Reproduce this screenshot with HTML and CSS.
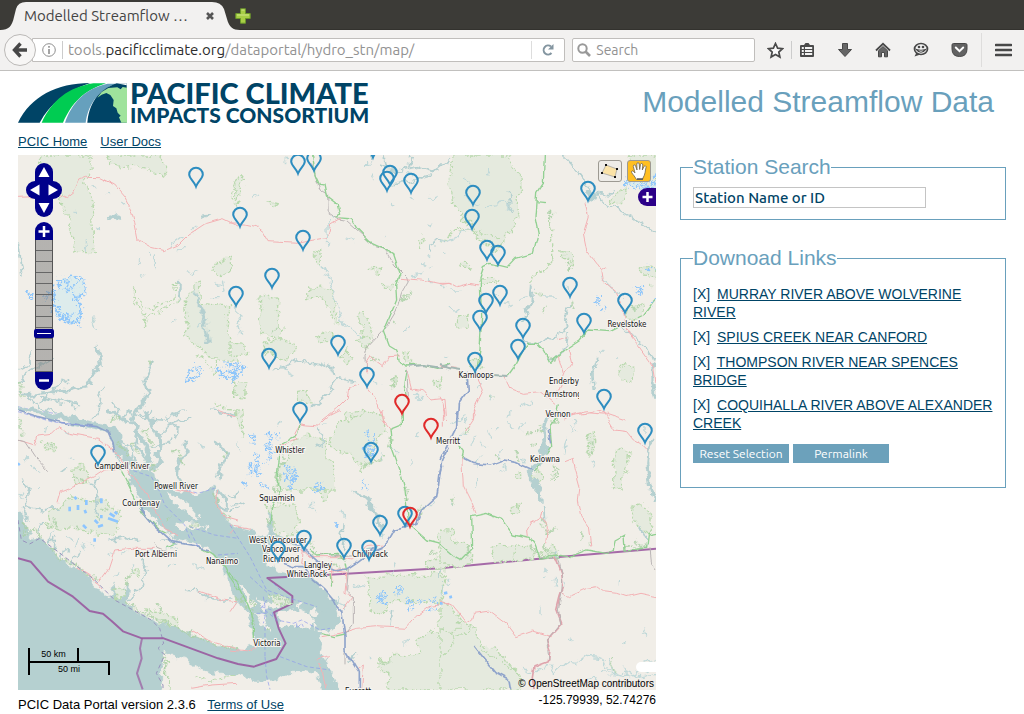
FILE: index.html
```html
<!DOCTYPE html>
<html lang="en">
<head>
<meta charset="utf-8">
<title>Modelled Streamflow Data</title>
<link rel="stylesheet" href="styles.css">
</head>
<body>
<header class="browser">
  <div class="tabstrip">
    <svg class="tab-shape" viewBox="0 0 232 28" aria-hidden="true"><path d="M0 28C9 28 12 24 14 15L16 7Q18 0 26 0H212Q221 0 224 7L227 17C229 25 233 28 240 28Z" fill="#f2f1f0"/></svg>
    <div class="tab"><span class="tab-title">Modelled Streamflow …</span>
      <button class="icon-btn" aria-label="Close tab"><svg width="10" height="10" viewBox="0 0 10 10"><path d="M2 2L8 8M8 2L2 8" stroke="#555" stroke-width="2.6"/></svg></button>
    </div>
    <button class="icon-btn new-tab" aria-label="New tab"><svg width="16" height="16" viewBox="0 0 16 16"><path d="M5.500 .8H10.500V5.500H15.200V10.500H10.500V15.200H5.500V10.500H.8V5.500H5.500Z" fill="#a8cf45" stroke="#6c982b"/><path d="M6.500 2H9.500M2 7H14" stroke="#cfe58a"/></svg></button>
  </div>
  <div class="toolbar">
    <button class="back" aria-label="Back"><svg width="16" height="16" viewBox="0 0 16 16"><path d="M8.500 1.500L2.500 8L8.500 14.500M3 8H15" fill="none" stroke="#474747" stroke-width="3.400"/></svg></button>
    <div class="urlbar">
      <svg width="14" height="14" viewBox="0 0 14 14" fill="none" stroke="#8e8e8e"><circle cx="7" cy="7" r="6.300"/><path d="M7 6V11M7 3V4.700" stroke-width="1.600"/></svg>
      <span class="url">tools.<b>pacificclimate.org</b>/dataportal/hydro_stn/map/</span>
      <button class="icon-btn reload" aria-label="Reload"><svg width="14" height="14" viewBox="0 0 14 14"><path d="M10.500 10A4.500 4.500 0 1 1 10 3.500" fill="none" stroke="#8395a0" stroke-width="2"/><path d="M12.500 1V6.500H7Z" fill="#8395a0"/></svg></button>
    </div>
    <label class="searchbar"><svg width="14" height="14" viewBox="0 0 14 14" fill="none" stroke="#999" stroke-width="2"><circle cx="5.500" cy="5.500" r="4.200"/><path d="M8.500 8.500L13 13" stroke-width="2.600"/></svg><input type="search" placeholder="Search" aria-label="Search"></label>
    <nav class="tools">
      <button class="icon-btn" aria-label="Bookmark"><svg width="17" height="17" viewBox="0 0 17 17"><path d="M8.500 1.500L10.600 6.100L15.500 6.600L11.800 10L12.900 15L8.500 12.400L4.100 15L5.200 10L1.500 6.600L6.400 6.100Z" fill="#fafafa" stroke="#4a4a4a" stroke-width="1.700"/></svg></button>
      <span class="divider"></span>
      <button class="icon-btn" aria-label="Bookmarks list"><svg width="16" height="16" viewBox="0 0 16 16"><path d="M2 3H5L6.500 1H9.500L11 3H14Q15 3 15 4V14Q15 15 14 15H2Q1 15 1 14V4Q1 3 2 3Z" fill="#4a4a4a"/><path d="M2.800 6H4.800M2.800 9H4.800M2.800 12H4.800M6 6H13.200M6 9H13.200M6 12H13.200" stroke="#f4f4f4" stroke-width="1.800"/></svg></button>
      <button class="icon-btn" aria-label="Downloads"><svg width="16" height="16" viewBox="0 0 16 16"><path d="M5.500 1.500H10.500V7.500H14.500L8 14.500L1.500 7.500H5.500Z" fill="#666" stroke="#484848"/></svg></button>
      <button class="icon-btn" aria-label="Home"><svg width="16" height="16" viewBox="0 0 16 16"><path d="M1 8.500L8 1.800L15 8.500" fill="none" stroke="#484848" stroke-width="1.800"/><path d="M3.500 8.700L8 4.500L12.500 8.700V14.800H9.500V10.500H6.500V14.800H3.500Z" fill="#666" stroke="#484848"/></svg></button>
      <button class="icon-btn" aria-label="Chat"><svg width="16" height="16" viewBox="0 0 16 16"><ellipse cx="8" cy="7" rx="6.500" ry="5.500" fill="#f4f4f4" stroke="#484848" stroke-width="1.700"/><path d="M3.500 10.500L1.500 14.500L7.500 12.500" fill="#484848"/><path d="M3.500 7.500Q8 13 12.500 7.500Q8 9 3.500 7.500Z" fill="#fff" stroke="#484848" stroke-width="1.200"/><circle cx="6" cy="5" r="1.300" fill="#484848"/><circle cx="10" cy="5" r="1.300" fill="#484848"/></svg></button>
      <button class="icon-btn" aria-label="Pocket"><svg width="17" height="16" viewBox="0 0 17 16"><path d="M2.500 1.500H14.500Q16 1.500 16 3V7Q16 14.500 8.500 14.500Q1 14.500 1 7V3Q1 1.500 2.500 1.500Z" fill="#626262" stroke="#484848"/><path d="M4.800 5.500L8.500 9.200L12.200 5.500" fill="none" stroke="#fff" stroke-width="2" stroke-linecap="round"/></svg></button>
      <span class="divider tall"></span>
      <button class="icon-btn" aria-label="Menu"><svg width="17" height="14" viewBox="0 0 17 14"><path d="M1 2H16M1 7H16M1 12H16" stroke="#484848" stroke-width="2.600" stroke-linecap="round"/></svg></button>
    </nav>
  </div>
</header>

<main class="page">
  <div class="masthead">
    <svg class="logo" width="352" height="42" viewBox="18 82 352 42" role="img" aria-label="Pacific Climate Impacts Consortium">
      <g transform="scale(.333333)">
        <path fill="#004466" d="M54 368C92 290 170 249 270 249C200 273 150 310 119 368Z"/>
        <path fill="#00cc52" d="M125 368C157 300 205 262 280 250H318C250 272 215 310 189 368Z"/>
        <path fill="#66a0bd" d="M195 368C215 310 255 265 323 251H346C290 275 265 315 257 368Z"/>
        <path fill="#004466" d="M262 368C266 315 292 270 350 250H380V368Z"/>
        <path fill="#9fe39c" d="M292 293L305 276L325 264L352 262L362 268L368 261L381 263V368H364L357 352L362 347L353 338L349 325L339 318L341 300L331 285L319 279L305 284Z"/>
        <path fill="#fff" d="M350 250L380 256V250Z"/>
      </g>
      <text class="logo-big" x="130" y="104">PACIFIC CLIMATE</text>
      <text class="logo-small" x="130" y="123">IMPACTS CONSORTIUM</text>
    </svg>
    <h1>Modelled Streamflow Data</h1>
  </div>
  <nav class="links"><a href="#home">PCIC Home</a><a href="#docs">User Docs</a></nav>

  <div class="columns">
    <section class="map-column">
      <div class="map">
        <svg class="tiles" viewBox="18 155 638 535" preserveAspectRatio="xMidYMid slice">
          <defs>
            <path id="pin" d="M0 -1.500C-2 -7 -6.800 -9.500 -6.800 -13.500A6.800 6.800 0 0 1 6.800 -13.500C6.800 -9.500 2 -7 0 -1.500Z"/>
            <clipPath id="tile-edge"><rect x="530" y="380" width="49" height="25"/></clipPath>
            <filter id="shore" x="-10%" y="-10%" width="120%" height="120%" color-interpolation-filters="sRGB">
              <feTurbulence type="fractalNoise" baseFrequency=".035" numOctaves="3" seed="4" result="n"/>
              <feDisplacementMap in="SourceGraphic" in2="n" scale="34" xChannelSelector="R" yChannelSelector="G"/>
            </filter>
            <filter id="bends" x="-10%" y="-10%" width="120%" height="120%" color-interpolation-filters="sRGB">
              <feTurbulence type="fractalNoise" baseFrequency=".03" numOctaves="2" seed="9" result="n"/>
              <feDisplacementMap in="SourceGraphic" in2="n" scale="16" xChannelSelector="R" yChannelSelector="G"/>
            </filter>
            <filter id="ice" x="-20%" y="-20%" width="140%" height="140%" color-interpolation-filters="sRGB">
              <feTurbulence type="fractalNoise" baseFrequency=".09" numOctaves="2" seed="2" result="n"/>
              <feDisplacementMap in="SourceGraphic" in2="n" scale="36" xChannelSelector="R" yChannelSelector="G"/>
            </filter>
          </defs>
          <rect x="18" y="155" width="638" height="535" fill="#f1eee8"/>

          <!-- north-west -->
          <g transform="translate(18 150) scale(.333333)">
            <path class="park" d="M60 15H222V60L200 85L210 125L228 175L218 230L235 305H165L163 240L130 145L100 100L70 60ZM270 15H430L445 75L400 68L370 50L320 55L285 40ZM585 370L590 345L640 320L645 350L610 380ZM500 560L510 500L505 455L530 395L550 390L545 460L600 465L635 470L630 540L640 600L660 620V640L570 620L530 580Z"/>
            <path class="park line" d="M350 415L345 450L385 500L378 525L410 490L480 460L485 390L470 395L465 445L400 475L375 470L360 440M540 610L560 640L595 670V630M585 760L620 775L660 780M650 690V740M655 100L645 140L660 160"/>
            <path class="water-fill" d="M265 200L280 190L300 195L306 216L280 212ZM550 195L575 190L560 207ZM525 410L545 460L565 500L575 580H568L562 520L535 460ZM480 390H489L486 455L478 440Z"/>
            <path class="glacier" d="M105 440L130 385L160 380L195 385L200 420L180 450L190 500L165 525L120 500Z"/>
            <path class="glacier line" d="M80 455L100 420L110 460L95 490M130 500L190 530M120 400L150 390L140 430L180 400M165 430L185 470M120 480L150 500L170 490M505 690L515 660L535 650L550 670L515 695M595 650L615 680L650 690L655 650L620 640M600 670L640 660M35 430H45V445H35Z"/>
            <path class="fjord" d="M230 585L245 610L250 640L220 670L215 705L150 720L20 735M401 635L378 680L390 720L368 770L345 810"/>
            <path class="fjord thin" d="M262 710L245 740L240 790L220 810M35 600L40 640L0 660M0 270L15 380M285 750L300 790L280 810M500 785L430 810L340 800M150 690L100 720L70 760M70 740L180 770M0 690L60 650L110 620M0 720L30 740L80 780L180 810"/>
            <path class="stream" d="M225 110L235 105M260 130L270 136M310 150L322 160M455 293L500 260M520 240L535 228M475 303L498 290M515 370L540 360M415 310V355M370 380L380 375M390 310L400 320M205 265V300M590 400L610 410M575 440L605 440M540 535L555 520L560 500M235 245L255 240M610 395L615 430M355 345L370 330M170 180L180 190M220 500L240 540M460 520L475 510"/>
            <path class="ferry" d="M0 770L50 782L110 790L150 808"/>
            <path class="road red" d="M0 142L60 140L80 145L125 136L145 146L168 128L185 90L205 82L245 83L290 105L320 140L340 180L350 220L360 270L400 292L440 302L480 285L510 255L560 222L615 206L660 228"/>
            <path class="woods" d="M0 690L10 700L5 730L20 745M390 635L400 640"/>
          </g>

          <!-- north -->
          <g transform="translate(230 150) scale(.333333)">
            <path class="park" d="M85 445L120 435L152 455L140 510L165 540L155 565L100 555L88 510L95 480ZM100 600L120 565L190 575L200 600L170 630L120 610ZM232 450L240 415L300 410L318 450L310 480L332 515L305 510L285 450L250 440ZM383 495L400 485L415 510L432 570L405 560ZM380 575L400 555L425 580L405 600ZM0 575L40 580L50 610L0 625ZM10 705L20 690L50 700L40 745L15 735ZM200 730L235 725L240 765L210 750ZM260 560L280 545L305 555L285 575L265 575ZM335 615L350 600L365 625L352 645ZM350 790L390 780L450 800V810H345ZM522 600L540 605L542 640L525 635ZM605 695L635 690L630 720ZM555 270L580 260L572 292ZM450 402L490 405L475 425ZM415 355L455 355L440 370ZM250 310L272 292L275 345ZM120 150L145 155L130 172ZM12 100L35 68L40 85L20 150L8 140ZM480 700L496 680L495 720Z"/>
            <path class="fjord thin" d="M460 15L470 55L520 60L560 50L610 65L660 25M440 15L420 30M540 50L550 15M470 55L450 45M490 105L530 95L600 75"/>
            <path class="fjord thin" d="M600 305L597 285L630 270L650 268M130 655L150 660L200 630L270 640L325 668M240 775L290 730L325 685L380 697"/>
            <path class="stream" d="M19 480L35 560M405 40H425M430 70L425 85M620 135L600 145M540 140L550 150M500 95L520 105M535 70L550 80M590 310L600 320M610 350L600 355M540 375L580 370M595 390L605 400M520 550L545 530M430 690L450 705M550 725L575 750M350 260L370 275M300 200L310 205M70 145L90 135M465 258L470 260M590 230L610 225M480 160L490 165M160 30L175 32M150 650L185 670M630 400L650 410M575 340L590 350M640 300L650 310M275 340L305 410L340 520L400 560M290 210L293 290"/>
            <path class="woods" d="M515 455L530 435L550 425M425 625L445 640M490 515L498 520M485 685L490 720M120 545L150 520M15 155L20 180"/>
            <path class="glacier line" d="M0 645L20 640L45 655L20 680L0 660M10 665L35 660M0 695H5"/>
            <path class="road grey" d="M245 40L270 120L293 135L295 190L325 210L350 215L430 285L465 295L495 345L530 380L535 395L515 430L500 480L470 530L410 595L405 620L407 665"/>
            <path class="road red" d="M0 222L45 222L80 230L100 245L117 275L200 280L292 262L302 225L330 208M510 385L575 390L640 403L660 400M410 670L407 640L420 620L460 650L475 620L510 618M410 710L440 750L460 810M390 700L360 710L355 740L320 775L275 810M530 660L545 720L580 725L600 750L645 745L650 810"/>
            <path class="road green" d="M248 15L255 75L268 103L285 105L292 140L325 165L332 190L318 203L365 207L380 235L420 275L460 293L490 310L510 370L497 405L500 450L475 510L460 545L475 585L500 600L508 635L530 648L580 645L620 655L660 643M528 660L522 700L530 745M516 795V810"/>
            <path class="road grey" d="M530 655L535 740"/>
            <path class="water-line" d="M540 650L580 645L640 655L660 645"/>
          </g>

          <!-- north-east -->
          <g transform="translate(440 150) scale(.333333)">
            <path class="park" d="M40 15H215V50L240 85L245 125L225 150L240 185L220 230L195 250L190 280L160 310L135 270L100 250L85 215L50 180L35 140L25 90ZM515 155L525 135L560 110L562 135L540 165ZM365 300L405 320L400 345L370 330ZM55 350L75 335L95 355L75 355ZM120 380L180 390L165 400H125ZM600 355L650 350V380L610 375ZM555 490L570 470L610 465L615 490L575 510ZM50 500L80 495L85 530L55 535ZM530 665L545 645L580 655L575 700L545 690ZM85 630L110 620L125 650L95 655ZM565 15H655V125L590 90Z"/>
            <path class="park line" d="M0 275L60 235L140 250L180 270M335 185V330L310 365L280 380L275 405M385 330L390 360M50 250L85 240L135 280"/>
            <path class="glacier" d="M555 100L600 115L655 120V95L620 105L570 85Z"/>
            <path class="glacier line" d="M560 80L600 90L655 75M625 350L645 360M585 410L610 415L600 430L590 425M465 455L480 465M475 440V460M635 460L648 450M490 475L500 480"/>
            <path class="water-fill" d="M440 125L475 135L465 155L445 150Z"/>
            <path class="fjord thin" d="M370 15L400 50L430 85L450 130L475 145L500 160L575 200L648 250M205 120L210 170L220 180M465 130L510 135L520 120"/>
            <path class="fjord" d="M280 410L275 460L245 510"/>
            <path class="fjord thin" d="M245 575L290 580L370 550L380 525L375 500L390 460M385 540L380 590L340 630L325 625M460 720L455 670L470 620M545 525L590 570L640 620L648 640"/>
            <path class="fjord" d="M635 640L640 710L648 740"/>
            <path class="stream" d="M0 272L50 260L90 235M490 375L500 400L550 440M95 110L75 90M75 145L120 170M140 170L190 160L215 175M135 75L150 60M170 430L160 450M25 420H55M30 475L60 480M480 610L490 600M70 685L75 700M195 455L215 470M160 730L150 760M10 625H25M345 435L310 435M380 410L385 430M245 445L265 440M530 625L540 620M110 715L125 700M240 770L280 750"/>
            <path class="woods" d="M285 432L310 435M335 185V210M305 480L320 475M395 455L400 470M150 735L160 740M330 620L350 630M385 345L390 360M580 480L600 470M630 400L640 410"/>
            <path class="road green" d="M313 15L310 100L290 130L285 200L295 250L280 310L225 325L200 352L150 340L130 350L120 380L122 430L125 500L120 600L112 650M205 675L230 640L260 580L290 580L310 600L330 640L375 600L420 570L445 540L510 545L560 520L610 495L648 445M290 155L320 158"/>
            <path class="road red" d="M435 160L445 200L430 250L440 300L485 360L490 395L530 430L550 480L560 540L590 580L640 650L648 700M485 360L500 350M0 400L30 400L50 410L90 400L115 405M0 650L50 655M105 665L130 720L100 780V810M190 675L210 715L250 730L300 725L345 760M385 600L395 640L375 670L350 740M370 670L355 620M370 800L440 785L500 790L560 810M0 740L10 760L15 810M355 570L380 560"/>
            <path class="road violet" d="M80 665L85 720L55 760L52 810"/>
            <path class="road green" d="M355 760L345 810"/>
            <path class="water-line" d="M0 645L30 655L60 660M155 675L205 678"/>
          </g>

          <!-- coast: ocean, straits and inlets -->
          <g transform="translate(18 410) scale(.333333)">
            <path class="water-fill" d="M-30 310L15 312L22 360L45 390L60 375L90 410L130 450L165 470L200 490L240 530L252 550L280 562L287 520L305 545L335 515L325 585L370 615L420 640L500 660L560 690L620 713L676 717L706 707L740 690L711 690L702 650L690 610L660 580L650 550L630 500L600 440L540 402L480 388L430 355L375 290L330 195L300 150L272 62L200 52L100 24L-30 -8V-18L110 10L220 36L275 45L300 60L330 130L370 170L405 180L412 215L470 242L540 252L590 232L603 295L635 335L676 360L716 372L748 378L756 330L762 290L770 330L765 370L800 385L800 400L735 395L760 420L735 432L750 462L786 488L836 498L876 492L896 520L936 550L956 590L966 640L920 680L905 730L930 770L980 870H916L900 795L866 785L816 785L776 810L720 815L660 795L580 790L500 748L440 725L432 780L430 870H-30Z"/>
            <path class="land" d="M447 248L480 262L515 285L545 318L540 330L510 315L480 290L455 265ZM405 318L422 325L420 340L408 335ZM470 345L500 335L540 340L560 350L520 355L485 360ZM300 140L325 145L335 180L345 215L330 205ZM560 345L575 350L570 362ZM660 520L690 545L710 580L700 590L680 560ZM715 560L745 580L790 560L790 590L760 585L735 610ZM776 625L800 605L850 600L885 615L888 640L860 655L840 640L820 650L796 650ZM885 590L910 605L900 620L880 610ZM715 615L740 625L755 660L735 650ZM840 585L860 580L855 600ZM905 660L925 670L930 700L950 760L945 780L920 750ZM935 730L965 745L970 780ZM885 640L900 650L890 660Z"/>
            <path class="park" d="M165 175L205 170L212 215L170 220ZM125 290L165 260L230 275L270 280L310 320L290 375L240 370L160 355L80 345L100 305ZM70 105L95 95L120 110L100 125ZM380 600L420 605L475 625L480 655L430 640ZM290 535L315 530L320 560L290 565ZM340 480L365 485L360 505Z"/>
            <path class="park line" d="M530 800L560 810L620 800L660 790M450 730L445 780L455 840"/>
            <path class="fjord wide" d="M380 0L410 60L430 105L420 160L395 175M345 40L370 90L395 130L385 165"/>
            <path class="fjord" d="M270 0L330 40L360 50L350 100L390 150M500 90L505 120L480 160L475 200L500 230M590 95L635 130L610 155L600 190L610 210M570 240L580 270L625 300V270L600 240"/>
            <path class="fjord thin" d="M660 15L580 0M520 20L450 45L420 90M450 30L480 60L470 90M300 30L340 0M390 110L460 90M295 80L340 110L345 150M90 400L110 380L105 430M60 370L75 340M130 440L140 415L155 430M160 460L180 430M25 290L70 300L125 295M370 20L400 0M330 0L350 40M245 200L230 225L240 260L235 310L248 330M330 575L370 530L385 480L375 450M130 190L150 175M15 200L30 240L20 290M15 290L30 330M100 370L90 400M230 240L220 215M620 20L660 5M498 540L540 545L580 570L640 570M430 390L480 395M270 395L320 385L365 395"/>
            <path class="woods" d="M15 340L25 375L50 360L75 385M75 400L90 410M100 420L130 450L165 455L200 490L240 510M325 580L365 605L420 630L480 655L560 690L620 712L660 715M280 30L300 20M300 100L330 130M395 165L420 180M590 250L600 300M620 310L640 330M450 325L460 320M520 345L540 340M330 520L340 490M415 585L440 610M175 345L190 355M230 320L245 335M250 300L270 290M85 350L110 335L120 350M440 740L445 780L450 800M80 100L110 115M610 140L630 120M340 100L360 130M160 200L200 215M0 10L10 80M380 60L400 110M470 120L500 160"/>
            <path class="lake" d="M155 290V304M170 260L175 268M180 285V300M205 270V285M200 300L204 310M250 265V280M275 310L290 320M270 325L300 335M240 350L255 345M195 345L205 355M230 385V395M230 330L240 340M250 315V325M0 165L5 160M290 305L298 312"/>
            <path class="stream" d="M0 250L15 260M60 240L70 230M20 150L30 140M130 60L150 70M185 380L175 420M95 370L110 360M400 420L420 440M440 420L470 415M310 430L330 420M140 380L165 395M200 400L195 425M350 460L345 490M300 480L290 500M520 470L560 480M450 470L480 465M560 110L540 90M60 190L40 170M150 140L165 150M75 60L90 55M290 430L275 440M210 395L230 420"/>
            <path class="road red" d="M0 90L50 105L60 75L100 70L120 50L155 70L240 85L290 125L345 200L370 235L400 280L440 355L480 380M120 280L130 245L180 225L230 200L260 180L300 175M600 0L655 20M245 515L270 480L290 420L340 415L410 415M660 575L610 570L540 545M175 470L215 495L255 540M520 660L580 695L650 715M470 235L530 250M600 240L590 280L625 320L660 330M520 835L580 825L660 820"/>
            <path class="road grey" d="M0 90L20 95L50 140L92 185M410 400L420 415L445 425"/>
            <path class="road green" d="M300 165L325 210L350 265L375 310L425 360L445 370M445 410L470 400M540 410L580 430L620 470L640 510L660 540"/>
            <path class="road violet" d="M0 0L60 20L130 38L240 50L270 65L285 100L290 130M365 290L385 320L410 350L460 395L530 407L570 420"/>
            <path class="ferry" d="M310 170L400 200L425 245L440 285L500 345L515 385M515 350L590 375L660 385M540 410L515 360M490 235L540 250L590 235M600 435L660 430M0 5L100 35L230 50"/>
            <path class="sea-border" d="M0 330L10 390L35 402L65 385L120 425L230 510L290 570L400 630L425 655L437 700L420 715L440 735L415 790L435 825V840"/>
            <path class="border" d="M0 445L38 455L90 515L165 560L215 603L255 611L280 632L315 664L372 685H437L600 745L660 762L708 770L775 747L803 700L782 655L768 607L823 580V558L748 504L934 494L1266 475L1596 443L1914 416"/>
            <path class="border soft" d="M372 685L366 715L371 745L357 790L374 838"/>
          </g>

          <!-- lower mainland -->
          <g transform="translate(230 410) scale(.333333)">
            <path class="park" d="M200 85L255 75L290 90L288 145L310 150L312 240L240 240L150 240L140 215L155 160L180 150ZM300 95L325 45L400 5L460 25L465 60L445 80L430 130L395 180L360 130L310 115ZM105 290L195 285L205 330L195 375L135 370L130 320ZM20 0H35L40 75L20 30ZM415 500L420 600L450 615L470 600L480 575L545 575L610 580L640 570L645 490ZM450 750L500 735L570 730L560 690L600 660L640 680L648 840H470L480 800L445 770ZM620 370L650 360V430L625 410ZM585 455L660 440V475L590 480Z"/>
            <path class="park" d="M115 555L160 560L190 575L140 590ZM270 240L300 245L285 280Z"/>
            <path class="glacier line" d="M60 80H75L70 100H60M70 130L85 135L75 190L100 195M110 75H125L120 110M105 95L125 140L110 155M165 170L185 175L200 190L185 215L170 210V180L200 200L175 240M255 225L275 222L275 240H255ZM90 220L115 235M395 210L405 225M400 230L415 240M40 220L45 230M75 160L90 170M60 160L65 200M410 65L415 85M430 75L435 90M140 70V85M405 110L430 120L430 135H410Z"/>
            <path class="glacier line" d="M445 550H460L465 575L445 580V560M450 565H465M495 535H515V550H500M530 570L545 580M530 600L545 590M560 575L580 570M600 570L625 580M590 600L620 595M320 345L325 340"/>
            <path class="water-fill" d="M362 235L400 255L430 285L448 310L460 360L452 372L440 320L415 285Z"/>
            <path class="fjord thin" d="M0 290L50 270M0 310L30 290M125 320L128 375M150 395L205 405M340 340L335 380L345 420M265 55L280 75L275 105L260 110M415 420L440 415M270 605L300 600M480 640L485 600M375 735L350 760M0 260L20 250"/>
            <path class="stream" d="M285 40L290 38M320 560L345 600M445 345L460 380M240 280L260 300M330 300L350 320M500 460L490 500M480 110L500 130M610 280L600 290M560 70L570 80M540 150V170M640 520V560M490 550L500 560M395 430L385 450M460 130L450 150M150 30L140 50M415 735L425 745M360 520L400 530M20 100L25 130M520 700L535 690"/>
            <path class="woods" d="M150 105L160 125L145 200L135 250M60 570L75 590M20 560L60 600L70 650M110 660L125 650M395 165L465 140M560 330L575 305M535 270L525 230M245 425L260 430M320 430L345 450M600 425L620 440M450 760L480 745M300 460L330 480M110 340L120 330M480 110V80M560 300L580 290M130 560L180 575M235 395L250 410"/>
            <path class="road red" d="M210 45L230 48L260 50L295 18L330 0M210 45L195 70L200 90L150 110M455 0L460 30L480 55M210 415L240 440L320 440L370 450L410 410L460 405M220 420L215 460L260 480L350 490L345 550L370 560M275 680L330 670L380 655L440 650L530 655L560 620L600 590L660 580M0 605L20 575M0 720L50 725L90 700M265 760L280 780L290 838M380 780L400 765L395 838M0 345L60 355M300 740L260 750M0 370L10 360"/>
            <path class="road red" d="M305 450V520M310 480H350M340 600L370 560"/>
            <path class="road grey" d="M355 480L350 540L370 560V640L345 670M345 725V760M270 430L340 440L400 435"/>
            <path class="road green" d="M517 0V40L480 55L485 110L510 180L525 240L535 330L545 350L590 390L630 400L660 430M210 45L200 80L150 105L140 190L150 240L125 290L120 340M240 420L260 435L320 430L345 450M345 460L350 485M0 490L30 540L55 590L70 640V690M275 670L310 680L345 672M300 490L305 530"/>
            <path class="road violet" d="M655 110L635 150L625 230L620 260L575 300L560 340L530 352L495 360L475 395L455 415L420 430L380 460L350 480L320 485L270 460L230 425L205 405L150 395M160 460L190 470L220 470L250 510L280 535L310 570L320 590L335 605L345 680V720L375 770L388 790V838M405 440L440 410"/>
            <path class="ferry" d="M0 345L60 440L110 540L180 565L260 590M110 570L90 600L105 620L100 640M105 600L140 630L190 640L215 630L270 660L300 655M200 640V655L215 640L220 650M100 560L110 620M150 740L230 770L300 780M105 740L110 800L120 838M80 610L110 610M95 590L125 600L130 620M60 500L120 555M130 520L150 540M105 650V740"/>
          </g>

          <!-- south-east -->
          <g transform="translate(440 410) scale(.333333)">
            <path class="park" d="M155 420L180 405L225 410L260 405L290 420L280 450L170 455ZM525 130L545 110L570 125L565 160L550 195L545 240L520 235L522 190ZM575 290L600 280L630 300L635 350L620 370L590 345L575 320ZM0 360L35 365L40 390L85 410L95 440L90 465H0ZM0 560L30 590L70 640L100 650L125 710L170 715L240 795L245 840H0ZM445 70L460 65L468 130L445 135ZM275 190L300 185L310 210L285 225ZM215 290L240 280L245 305L225 310ZM225 190L245 185V205H225ZM300 430L340 405L355 430L330 445Z"/>
            <path class="park line" d="M0 480L15 510L10 550M0 660L50 680L100 650M60 640L30 720L0 740M225 410L220 450M130 720L240 790"/>
            <path class="fjord wide" d="M325 20L312 50L318 110L290 165L266 185L275 215L300 245L305 275"/>
            <path class="fjord" d="M648 85L625 110L620 160L635 250L648 270"/>
            <path class="fjord thin" d="M310 290L315 335M345 425L355 445M600 350L620 390L625 410M0 480V510"/>
            <path class="stream" d="M245 775L290 785L330 765L345 790L380 755L410 760L440 735L480 740L500 780L540 795L560 780L600 800L648 790M505 750L515 770L510 800M440 800L470 810M485 790L560 800L620 780M555 770L560 800M610 760L648 745"/>
            <path class="stream" d="M310 480L320 490M538 510V530M615 660L620 680M380 680L400 695M240 40L260 35M310 510L320 500M365 510L370 520M300 610V590M60 70H85M90 110L100 80M345 510L350 530M190 120L180 160M240 60L250 40M70 40L80 20M130 90L140 110M160 60L180 50M380 90L370 130M400 30L410 60M40 270L45 285M100 230L110 210M450 150L460 170M20 510L30 520M615 45V75M250 140L255 160M560 700L550 710M30 40L60 30M70 10L60 30M200 40L220 60M180 180L200 170M120 140L110 170M385 40L400 70M200 20L215 10M150 80L140 60"/>
            <path class="woods" d="M255 65H305L300 45M340 45L355 25M230 120L240 155M170 130L180 155M335 170L365 180M345 190V210M340 170L350 200M300 350L330 360L320 375M305 330L320 345M320 370L345 355M425 370L422 390M450 400L440 415M280 410L300 440L355 440M310 410L340 430M560 415L620 410M40 260L45 280M155 315L162 325M235 120V160M270 100H295M90 410L80 440M450 75L460 135M580 395L610 415M310 400L330 440L345 430M70 65L90 55M520 740L515 790"/>
            <path class="lake" d="M12 550L22 548M0 580H8M28 562L36 560"/>
            <path class="road red" d="M370 30L400 15L440 10L490 0L500 20L525 60L560 65L580 90L600 100L620 120M375 155L400 145L405 175L420 230L415 270L425 320L445 350L453 410M105 310L90 270L70 230L65 140M105 0L100 30L80 60M320 400L325 350L305 320L270 340L260 360L262 385M365 545L385 560L440 535L470 530L490 545L530 550L560 560L600 550L648 560M0 570L35 585L80 640L95 630L100 610L150 603L200 640L230 680L280 663L335 680M305 300L300 325M10 0V50"/>
            <path class="road red dark" d="M345 440L365 490L370 530L360 560L350 600L365 640L320 690L330 720L325 755L285 770L280 800L285 840"/>
            <path class="road grey" d="M355 445L368 500L365 550L355 600L362 640L320 690L327 750M630 415L635 460L648 480"/>
            <path class="road green" d="M55 105L70 125L65 145M0 405L40 440L62 452L98 415L95 320L140 310L185 328L220 375L270 385L285 405L300 445L350 435L390 440L440 420L500 430L520 425L525 390L552 375L555 420L620 415L625 375L648 370M355 20L330 50L335 110L320 130M300 160L280 180"/>
            <path class="road violet" d="M68 143L100 160L150 165L190 150L230 158L280 180M52 0L50 50L20 110L0 150M0 190L5 170M100 705L140 755L165 785L210 810L215 838M325 60L332 100"/>
          </g>

          <g class="places">
            <text x="627" y="327">Revelstoke</text><text x="476" y="378">Kamloops</text><text x="564" y="384">Enderby</text>
            <text x="563" y="397" clip-path="url(#tile-edge)">Armstrong</text><text x="558" y="417">Vernon</text>
            <text x="448" y="444">Merritt</text><text x="545" y="462">Kelowna</text><text x="290" y="453">Whistler</text>
            <text x="277" y="501">Squamish</text><text x="122" y="469">Campbell River</text><text x="176" y="489">Powell River</text>
            <text x="141" y="506">Courtenay</text><text x="156" y="557">Port Alberni</text><text x="222" y="564">Nanaimo</text>
            <text x="278" y="543">West Vancouver</text><text x="281" y="552">Vancouver</text><text x="281" y="562">Richmond</text>
            <text x="370" y="557">Chilliwack</text><text x="318" y="568">Langley</text><text x="307" y="577">White Rock</text>
            <text x="267" y="646">Victoria</text><text x="358" y="694">Everett</text>
          </g>
          <rect x="636" y="662" width="26" height="10" rx="5" fill="#fff"/>

          <g class="pins">
            <use href="#pin" x="196" y="188"/><use href="#pin" x="298" y="175"/><use href="#pin" x="314" y="172"/><use href="#pin" x="373" y="159"/>
            <use href="#pin" x="390" y="186"/><use href="#pin" x="387" y="192"/><use href="#pin" x="411" y="194"/><use href="#pin" x="473" y="206"/>
            <use href="#pin" x="472" y="230"/><use href="#pin" x="588" y="202"/><use href="#pin" x="240" y="228"/><use href="#pin" x="303" y="251"/>
            <use href="#pin" x="272" y="289"/><use href="#pin" x="236" y="307"/><use href="#pin" x="338" y="356"/><use href="#pin" x="269" y="369"/>
            <use href="#pin" x="367" y="388"/><use href="#pin" x="300" y="423"/><use href="#pin" x="487" y="261"/><use href="#pin" x="498" y="266"/>
            <use href="#pin" x="500" y="306"/><use href="#pin" x="486" y="314"/><use href="#pin" x="480" y="331"/><use href="#pin" x="523" y="339"/>
            <use href="#pin" x="518" y="360"/><use href="#pin" x="475" y="373"/><use href="#pin" x="570" y="298"/><use href="#pin" x="584" y="334"/>
            <use href="#pin" x="625" y="314"/><use href="#pin" x="604" y="410"/><use href="#pin" x="645" y="444"/><use href="#pin" x="371" y="463"/>
            <use href="#pin" x="380" y="536"/><use href="#pin" x="405" y="527"/><use href="#pin" x="304" y="551"/><use href="#pin" x="278" y="562"/>
            <use href="#pin" x="344" y="559"/><use href="#pin" x="369" y="561"/><use href="#pin" x="98" y="466"/>
            <g class="selected"><use href="#pin" x="402" y="415"/><use href="#pin" x="431" y="439"/><use href="#pin" x="410" y="528"/></g>
          </g>
        </svg>

        <div class="nav-control">
          <div class="pan">
            <button class="up" aria-label="Pan north"><svg viewBox="0 0 18 18"><path d="M9 4L14.500 14H3.500Z"/></svg></button>
            <button class="west" aria-label="Pan west"><svg viewBox="0 0 18 18"><path d="M4 9L13.500 3.500V14.500Z"/></svg></button>
            <button class="east" aria-label="Pan east"><svg viewBox="0 0 18 18"><path d="M14 9L4.500 3.500V14.500Z"/></svg></button>
            <button class="down" aria-label="Pan south"><svg viewBox="0 0 18 18"><path d="M9 14L14.500 4H3.500Z"/></svg></button>
          </div>
          <div class="zoom">
            <button class="zoom-in" aria-label="Zoom in"><svg viewBox="0 0 18 18"><path d="M9 4V15M3.500 9.500H14.500" stroke="#fff" stroke-width="2.500"/></svg></button>
            <input type="range" min="0" max="11" value="3" aria-label="Zoom level">
            <button class="zoom-out" aria-label="Zoom out"><svg viewBox="0 0 18 18"><path d="M4 8.500H14" stroke="#fff" stroke-width="2.500"/></svg></button>
          </div>
        </div>

        <div class="edit-tools">
          <button aria-label="Draw polygon"><svg width="22" height="20" viewBox="0 0 22 20"><path d="M7 4L18 8L16 16L3 12Z" fill="#fbe3a7" stroke="#999" stroke-width=".7"/><path d="M6 3h2v2h-2ZM17 7h2v2h-2ZM15 15h2v2h-2ZM2 11h2v2H2Z" fill="#111"/></svg></button>
          <button class="active" aria-label="Pan map"><svg width="20" height="20" viewBox="0 0 20 20"><path d="M6.500 17C5 14 2 12 2.500 10.500C3 9 5 10.500 6 12L4.300 5.500C4 3.500 6 3.200 6.600 5L8 9L7.800 3C8 1.200 10 1.200 10.200 3L10.700 8.500L11.500 3.300C12 1.800 14 2.300 13.800 4L13.300 9L15 5.500C16 4.200 17.500 5 17 6.500C16 10 16.500 13 14 17L13.500 18.500H7.500Z" fill="#fff" stroke="#6b6252" stroke-width=".8"/><path d="M8 18H14" stroke="#555" stroke-width="1.500"/></svg></button>
        </div>
        <button class="layers" aria-label="Show layers"><svg width="18" height="18" viewBox="0 0 18 18"><path d="M9.500 4V14M4.500 9H14.500" stroke="#fff" stroke-width="2.500"/></svg></button>
        <div class="scale"><span class="km">50 km</span><span class="mi">50 mi</span></div>
        <div class="attribution">© OpenStreetMap contributors</div>
      </div>
      <footer class="foot">
        <p>PCIC Data Portal version 2.3.6 <a href="#terms">Terms of Use</a></p>
        <output class="coords">-125.79939, 52.74276</output>
      </footer>
    </section>

    <aside class="sidebar">
      <fieldset class="search">
        <legend>Station Search</legend>
        <input type="text" value="Station Name or ID" aria-label="Station name or ID">
      </fieldset>
      <fieldset class="downloads">
        <legend>Downoad Links</legend>
        <ul>
          <li><span>[X]</span> <a href="#murray">MURRAY RIVER ABOVE WOLVERINE RIVER</a></li>
          <li><span>[X]</span> <a href="#spius">SPIUS CREEK NEAR CANFORD</a></li>
          <li><span>[X]</span> <a href="#thompson">THOMPSON RIVER NEAR SPENCES BRIDGE</a></li>
          <li><span>[X]</span> <a href="#coquihalla">COQUIHALLA RIVER ABOVE ALEXANDER CREEK</a></li>
        </ul>
        <div class="actions"><button>Reset Selection</button><button>Permalink</button></div>
      </fieldset>
    </aside>
  </div>
</main>
</body>
</html>
```
FILE: styles.css
```css
* { box-sizing: border-box; }
body { margin: 0; background: #fff; color: #000; font-family: "Liberation Sans", Arial, sans-serif; font-size: 13px; }
button { font: inherit; padding: 0; border: 0; background: none; }
svg { display: block; }
a { color: #046; }

/* browser window */
.browser { font-family: Ubuntu, "Noto Sans", sans-serif; font-size: 15px; }
.tabstrip { position: relative; display: flex; align-items: center; gap: 20px; height: 30px; padding: 2px 0 0 24px; background: #3c3b37; border-bottom: 1px solid #33322e; }
.tab-shape { position: absolute; left: 0; bottom: -1px; width: 232px; height: 28px; overflow: visible; }
.tab { position: relative; display: flex; align-items: center; justify-content: space-between; width: 191px; color: #444; }
.tab-title { line-height: 20px; white-space: nowrap; }
.icon-btn { display: flex; align-items: center; justify-content: center; }
.toolbar { display: flex; align-items: center; height: 41px; padding: 0 12px 0 4px; background: #f2f1f0; border-bottom: 1px solid #c1c0be; }
.back { position: relative; z-index: 1; display: flex; align-items: center; justify-content: center; flex: none; width: 32px; height: 32px; background: #f7f6f5; border: 1px solid #bbb9b7; border-radius: 50%; }
.urlbar { display: flex; align-items: center; flex: 535 1 0; height: 24px; margin-left: -4px; padding-left: 9px; background: #fff; border: 1px solid #c0bebc; border-radius: 0 2px 2px 0; min-width: 0; }
.url { flex: 1; margin-left: 6px; padding-left: 5px; border-left: 1px solid #ccc; color: #929292; line-height: 18px; white-space: nowrap; overflow: hidden; }
.url b { font-weight: 400; color: #2e2e2e; }
.reload { width: 33px; height: 18px; border-left: 1px solid #ddd; }
.searchbar { display: flex; align-items: center; gap: 5px; flex: 181 1 0; height: 24px; margin-left: 7px; padding-left: 4px; background: #fff; border: 1px solid #c0bebc; border-radius: 2px; min-width: 0; }
.searchbar input { flex: 1; min-width: 0; padding: 0; border: 0; outline: 0; background: none; font: inherit; font-size: 14px; }
.searchbar input::placeholder { color: #929292; opacity: 1; }
.tools { display: flex; align-items: center; gap: 22px; margin-left: 12px; }
.divider { width: 1px; height: 18px; margin: 0 -15px; background: #ccc; }
.divider.tall { height: 34px; margin: 0 -9px; background: #dedddc; }

/* portal page */
.page { padding: 11px 18px 0; }
.masthead { display: flex; align-items: flex-start; justify-content: space-between; padding-right: 12px; }
.logo { overflow: visible; }
.logo-big, .logo-small { font-family: Lato, sans-serif; font-weight: 900; fill: #046; }
.logo-big { font-size: 29px; }
.logo-small { font-size: 21px; }
h1 { margin: 2px 0 0; font-size: 30px; line-height: 36px; font-weight: 400; color: #69a0bc; }
.links { display: flex; gap: 13px; margin: 9px 0 5px; line-height: 17px; }
.columns { display: flex; align-items: flex-start; gap: 24px; }
.map-column { flex: 1; min-width: 0; }
.map { position: relative; aspect-ratio: 638 / 535; overflow: hidden; }
.tiles { width: 100%; height: 100%; }

/* cartography */
.tiles g path { stroke-linejoin: round; }
.tiles .water-fill { fill: #b5d0d0; stroke: #b5d0d0; stroke-width: 1; filter: url(#shore); }
.land { fill: #f1eee8; filter: url(#shore); }
.tiles .park { fill: #e5eade; stroke: #b9d9ae; stroke-width: 4; stroke-dasharray: 9 5; filter: url(#shore); }
.tiles .park.line { fill: none; }
.tiles .glacier { fill: #ddecec; stroke: #8fc6fa; stroke-width: 8; stroke-dasharray: 9 4 5 3; filter: url(#ice); }
.tiles .glacier.line { fill: none; }
.fjord, .stream, .woods, .lake, .ferry, .road, .border, .sea-border, .water-line { fill: none; }
.fjord { stroke: #b5d0d0; stroke-width: 9; filter: url(#shore); }
.fjord.thin { stroke-width: 5; }
.fjord.wide { stroke-width: 13; }
.water-line { stroke: #a3b8b4; stroke-width: 6; filter: url(#bends); }
.stream { stroke: #c1d9d9; stroke-width: 4; filter: url(#shore); }
.woods { stroke: #acd1a7; stroke-width: 9; stroke-dasharray: 7 3 3 4; opacity: .8; filter: url(#shore); }
.lake { stroke: #8cc5ff; stroke-width: 8; }
.ferry { stroke: #8d98ed; stroke-width: 2; stroke-dasharray: 12 7; }
.road { stroke-width: 3; filter: url(#bends); }
.road.red { stroke: #f3b1b4; }
.road.red.dark { stroke: #dfa4ad; stroke-width: 5; }
.road.grey { stroke: #b9b4b5; }
.road.green { stroke: #92d092; stroke-width: 4; }
.road.violet { stroke: #8fa4cb; stroke-width: 5; }
.border { stroke: #98529c; stroke-width: 6; opacity: .85; }
.border.soft { opacity: .65; }
.sea-border { stroke: #9893bd; stroke-width: 3; stroke-dasharray: 13 9; }
.places { font-family: "DejaVu Sans Condensed", "DejaVu Sans", sans-serif; font-stretch: condensed; font-size: 8px; fill: #111; stroke: #f7f5f1; stroke-width: 2px; paint-order: stroke; text-anchor: middle; }
.pins { fill: none; stroke: #2d8dc0; stroke-width: 2; }
.selected { stroke: #e02a2a; }

/* map controls */
.nav-control { position: absolute; left: 8px; top: 8px; width: 36px; }
.pan { display: grid; grid-template-columns: 18px 18px; }
.pan button, .zoom button { width: 18px; height: 18px; background: #00008b; fill: #fff; }
.up, .down { grid-column: 1 / 3; justify-self: center; }
.pan .up { border-radius: 9px 9px 0 0; }
.pan .down { border-radius: 0 0 9px 9px; }
.pan .west { border-radius: 9px 0 0 9px; }
.pan .east { border-radius: 0 9px 9px 0; }
.zoom { display: flex; flex-direction: column; align-items: center; margin-top: 5px; }
.zoom .zoom-in { border-radius: 9px 9px 0 0; }
.zoom .zoom-out { border-radius: 0 0 9px 9px; }
.zoom input { appearance: none; writing-mode: vertical-lr; direction: rtl; width: 20px; height: 132px; margin: 0; background: none; }
.zoom input::-webkit-slider-runnable-track { width: 18px; height: 132px; border: solid #555; border-width: 0 1px; background: repeating-linear-gradient(to bottom, rgba(120, 120, 120, .5) 0 10px, #666 10px 11px); }
.zoom input::-webkit-slider-thumb { appearance: none; width: 20px; height: 9px; margin-left: -2px; border: 3px solid #00008b; border-width: 4px 3px; border-radius: 2px; background: #fff; }
.edit-tools { position: absolute; top: 5px; right: 5px; display: flex; gap: 5px; }
.edit-tools button { display: flex; align-items: center; justify-content: center; width: 24px; height: 22px; background: #eeece7; border: 1px solid #9d9a92; border-radius: 3px; }
.edit-tools .active { background: #ffbf22; }
.layers { position: absolute; top: 33px; right: 0; width: 18px; height: 18px; background: #2c0088; border-radius: 9px 0 0 9px; }
.scale { position: absolute; left: 10px; bottom: 15px; display: flex; flex-direction: column; font-size: 9px; line-height: 12px; text-align: center; }
.km { width: 51px; height: 13px; border: solid #000; border-width: 0 2px; }
.mi { width: 82px; height: 14px; border: solid #000; border-width: 2px 2px 0; }
.attribution { position: absolute; right: 2px; bottom: 0; font-size: 10px; line-height: 12px; }
.foot { display: flex; justify-content: space-between; line-height: 17px; }
.foot p { margin: 6px 0 0; }
.foot a { margin-left: 8px; }
.coords { margin-top: 2px; font-size: 12px; }

/* sidebar */
.sidebar { flex: none; width: 326px; color: #046; }
fieldset { min-width: 0; margin: 0; padding: 0 12px; border: 1px solid #69a0bc; }
legend { padding: 0; font-size: 21px; line-height: 24px; color: #69a0bc; }
.search { margin-bottom: 26px; padding-bottom: 11px; }
.search input { display: block; width: 233px; height: 21px; margin-top: 8px; padding: 0 1px; border: 1px solid #c4c4c4; color: #046; font: 500 15px/18px Ubuntu, "Noto Sans", sans-serif; }
.downloads { padding-bottom: 24px; }
ul { list-style: none; margin: 15px 0 12px; padding: 0; font-size: 14px; line-height: 18px; }
li { margin-bottom: 7px; }
li span { margin-right: 3px; }
.actions { display: flex; gap: 4px; }
.actions button { width: 96px; height: 19px; background: #6ca1bb; color: #fff; font: 12px/18px Ubuntu, "Noto Sans", sans-serif; }
```
